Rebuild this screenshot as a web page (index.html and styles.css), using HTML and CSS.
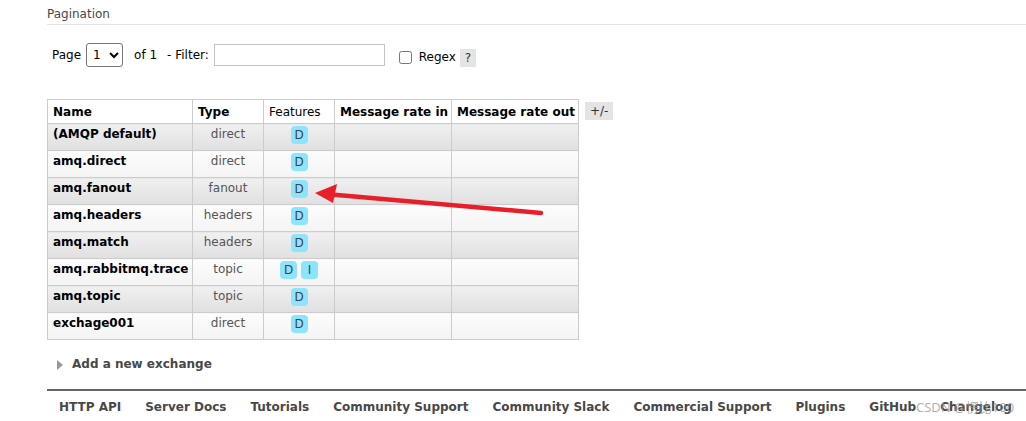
FILE: index.html
```html
<!DOCTYPE html>
<html>
<head>
<meta charset="utf-8">
<link rel="stylesheet" href="styles.css">
</head>
<body>
<div class="page">
  <h3 class="section-title">Pagination</h3>
  <div class="pager">
    <span class="lbl">Page</span>
    <select class="sel"><option>1</option></select>
    <span class="lbl of">of 1</span>
    <span class="lbl">- Filter:</span>
    <input class="filter" type="text">
    <label class="regex"><input type="checkbox" class="chk"><span>Regex</span></label>
    <span class="help">?</span>
  </div>

  <div class="table-wrap">
    <table class="list">
      <colgroup>
        <col class="c-name"><col class="c-type"><col class="c-feat"><col class="c-in"><col class="c-out">
      </colgroup>
      <thead>
        <tr>
          <th>Name</th>
          <th>Type</th>
          <th class="th-feat">Features</th>
          <th>Message rate in</th>
          <th>Message rate out</th>
        </tr>
      </thead>
      <tbody>
        <tr class="alt1"><td class="name">(AMQP default)</td><td class="type">direct</td><td class="feat"><span class="badge">D</span></td><td></td><td></td></tr>
        <tr class="alt2"><td class="name">amq.direct</td><td class="type">direct</td><td class="feat"><span class="badge">D</span></td><td></td><td></td></tr>
        <tr class="alt1"><td class="name">amq.fanout</td><td class="type">fanout</td><td class="feat"><span class="badge">D</span></td><td></td><td></td></tr>
        <tr class="alt2"><td class="name">amq.headers</td><td class="type">headers</td><td class="feat"><span class="badge">D</span></td><td></td><td></td></tr>
        <tr class="alt1"><td class="name">amq.match</td><td class="type">headers</td><td class="feat"><span class="badge">D</span></td><td></td><td></td></tr>
        <tr class="alt2"><td class="name">amq.rabbitmq.trace</td><td class="type">topic</td><td class="feat"><span class="badge">D</span><span class="badge">I</span></td><td></td><td></td></tr>
        <tr class="alt1"><td class="name">amq.topic</td><td class="type">topic</td><td class="feat"><span class="badge">D</span></td><td></td><td></td></tr>
        <tr class="alt2"><td class="name">exchage001</td><td class="type">direct</td><td class="feat"><span class="badge">D</span></td><td></td><td></td></tr>
      </tbody>
    </table>
    <span class="toggle">+/-</span>
  </div>

  <div class="add">
    <span class="tri"></span><span>Add a new exchange</span>
  </div>

  <div class="footer">
    <a>HTTP API</a>
    <a>Server Docs</a>
    <a>Tutorials</a>
    <a>Community Support</a>
    <a>Community Slack</a>
    <a>Commercial Support</a>
    <a>Plugins</a>
    <a>GitHub</a>
    <a>Changelog</a>
  </div>
</div>

<div class="watermark">CSDN @愣比100</div>

<svg class="arrow" width="1026" height="421" viewBox="0 0 1026 421">
  <line x1="541" y1="213" x2="326" y2="194" stroke="#e81e28" stroke-width="4.5" stroke-linecap="round"/>
  <polygon points="315,193 337,184 333,203" fill="#e81e28"/>
</svg>
</body>
</html>
```

FILE: styles.css
```css
html, body {
  margin: 0;
  padding: 0;
  background: #fff;
}
body {
  font-family: "DejaVu Sans", Verdana, sans-serif;
  font-size: 12px;
  color: #000;
  width: 1026px;
  height: 421px;
  overflow: hidden;
  position: relative;
}
.page {
  padding-left: 47px;
}
.section-title {
  margin: 0;
  padding: 8px 0 3px 0;
  font-size: 12px;
  font-weight: normal;
  color: #484848;
  border-bottom: 1px solid #e4e4e4;
  line-height: 13px;
}
.pager {
  display: flex;
  align-items: center;
  padding: 18px 0 0 5px;
  height: 24px;
}
.lbl {
  color: #000;
}
.sel {
  margin: 0 0 0 5px;
  width: 37px;
  height: 24px;
  font-family: "DejaVu Sans", sans-serif;
  font-size: 12px;
  border: 1px solid #767676;
  border-radius: 3px;
  background: #fff;
  padding: 0 2px;
}
.of {
  margin-left: 11px;
  margin-right: 10px;
}
.filter {
  margin-left: 5px;
  width: 165px;
  height: 18px;
  border: 1px solid #c4c4c4;
  padding: 1px 2px;
}
.regex {
  display: flex;
  align-items: center;
  margin-left: 12px;
  margin-top: 4px;
}
.chk {
  margin: 0 7px 0 2px;
  width: 13px;
  height: 13px;
}
.help {
  margin-left: 4px;
  margin-top: 6px;
  background: #e4e4e4;
  color: #333;
  padding: 1px 5px;
  line-height: 16px;
}
.table-wrap {
  display: flex;
  align-items: flex-start;
  margin-top: 32px;
}
.list {
  border-collapse: collapse;
  table-layout: fixed;
  width: 531px;
}
.c-name { width: 145px; }
.c-type { width: 71px; }
.c-feat { width: 71px; }
.c-in { width: 117px; }
.c-out { width: 127px; }
.list th, .list td {
  border: 1px solid #ccc;
  padding: 0 5px;
  white-space: nowrap;
  overflow: hidden;
}
.list thead tr {
  height: 24px;
}
.list th {
  text-align: left;
  font-weight: bold;
  background: #fff;
  line-height: 15px;
  padding-top: 1px;
}
.list th.th-feat {
  font-weight: normal;
}
.list tbody tr {
  height: 27px;
}
.list td {
  vertical-align: top;
  line-height: 15px;
  padding-top: 3px;
  padding-bottom: 0;
}
.alt1 td {
  background: linear-gradient(#f0f0f0, #e0e0e0);
}
.alt2 td {
  background: linear-gradient(#fcfcfc, #f4f4f4);
}
.name {
  font-weight: bold;
}
.type {
  text-align: center;
  color: #555;
}
.feat {
  text-align: center;
}
.badge {
  display: inline-block;
  vertical-align: top;
  background: #8de5fd;
  color: #444;
  border-radius: 4px;
  width: 17px;
  height: 18px;
  line-height: 18px;
  text-align: center;
  margin: -1px 2px 0 2px;
}
.toggle {
  margin-left: 6px;
  margin-top: 3px;
  background: #e4e4e4;
  color: #333;
  padding: 0 5px;
  line-height: 18px;
}
.add {
  display: flex;
  align-items: center;
  margin-top: 17px;
  padding-left: 10px;
  font-weight: bold;
  color: #484848;
  font-size: 12px;
  line-height: 15px;
}
.tri {
  width: 0;
  height: 0;
  border-top: 5px solid transparent;
  border-bottom: 5px solid transparent;
  border-left: 6px solid #999;
  margin-right: 9px;
}
.footer {
  margin-top: 17px;
  border-top: 2px solid #666;
  display: flex;
  gap: 24px;
  padding: 9px 0 0 12px;
  white-space: nowrap;
  line-height: 15px;
}
.footer a {
  font-weight: bold;
  color: #484848;
  font-size: 12px;
}
.watermark {
  position: absolute;
  left: 916px;
  top: 397px;
  color: rgba(150,150,150,0.75);
  font-family: "Noto Sans", "Noto Sans CJK SC", sans-serif;
  font-size: 13px;
}
.arrow {
  position: absolute;
  left: 0;
  top: 0;
  pointer-events: none;
}
```
